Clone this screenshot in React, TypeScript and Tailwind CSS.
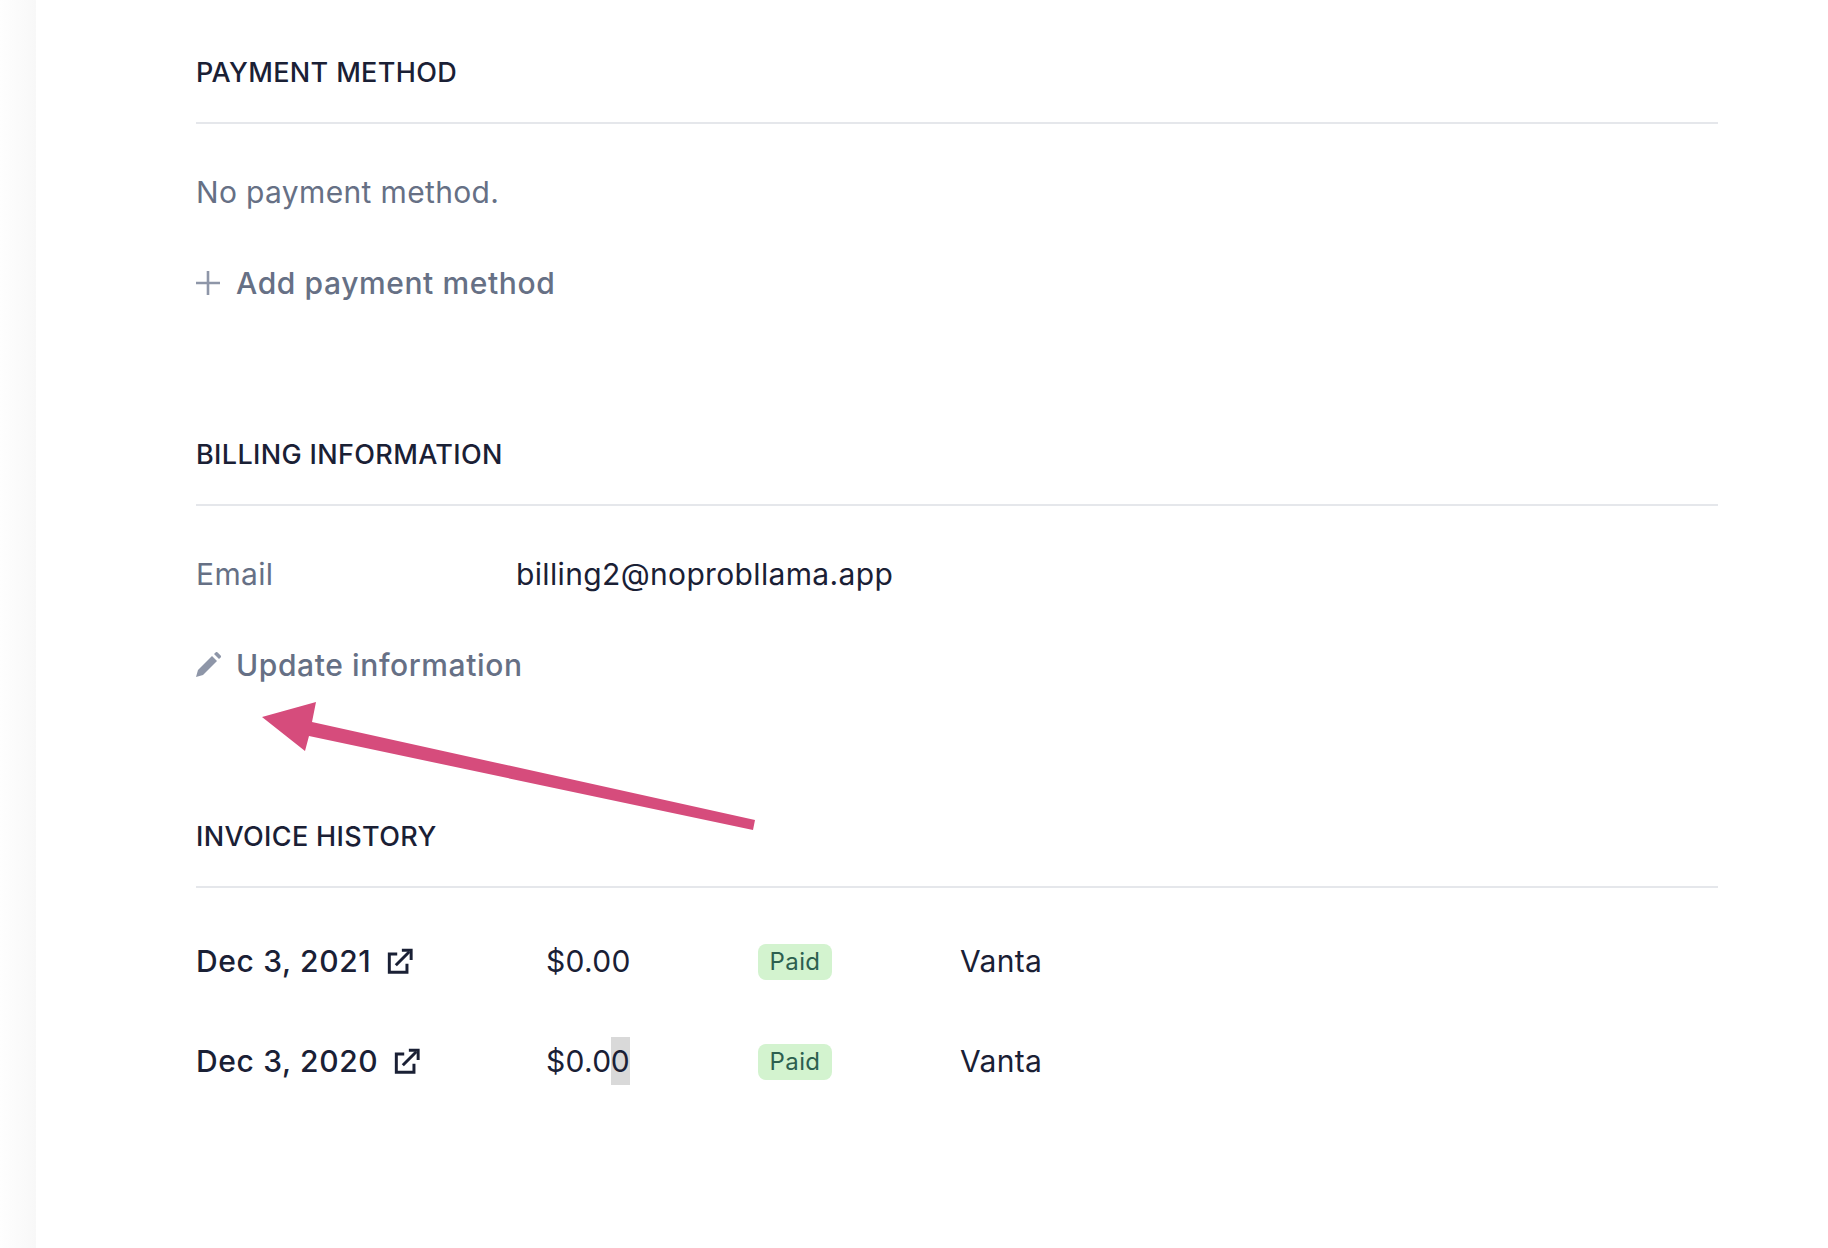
const PlusIcon = () => (
  <svg className="h-[24px] w-[24px]" viewBox="0 0 24 24" fill="none" stroke="#8e96a8" strokeWidth="2.6">
    <path d="M0 12h24M12 0v24" />
  </svg>
);

const PencilIcon = () => (
  <svg className="h-[26px] w-[26px]" viewBox="0 0 26 26" fill="#8e96a8">
    <path d="M0 25l2-7L16 4l5 5L7 23z" />
    <path d="M18 2l1.6-1.6a1.5 1.5 0 0 1 2 0l3 3a1.5 1.5 0 0 1 0 2L23 7z" />
  </svg>
);

const LinkIcon = () => (
  <svg className="ml-[16px] h-[26px] w-[26px]" viewBox="0 0 28 28" fill="none" stroke="#1a2035" strokeWidth="3.2">
    <path d="M11 6.5H2.5V26h19v-9" />
    <path d="M9.5 18.5L24 4" />
    <path d="M16 2.5h10V13" />
  </svg>
);

const SectionTitle = ({ children }: { children: string }) => (
  <div className="h-[67px] border-b-2 border-[#e5e7eb] text-[27px] leading-[32px] font-medium tracking-[0.35px] text-[#1a2035]">
    {children}
  </div>
);

const ActionRow = ({ icon, label }: { icon: React.ReactNode; label: string }) => (
  <div className="mt-[43px] flex h-[48px] items-center font-medium tracking-[0.6px] text-[#667085]">
    <span className="flex w-[40px] items-center">{icon}</span>
    <span>{label}</span>
  </div>
);

const InvoiceRow = ({ date, selected }: { date: string; selected?: boolean }) => (
  <div className="flex h-[48px] items-center">
    <div className="flex w-[350px] items-center font-medium tracking-[0.65px]">
      <span>{date}</span>
      <LinkIcon />
    </div>
    <div className="w-[212px]">
      {selected ? (
        <>
          $0.0<span className="-ml-[1px] inline-block bg-[#d9d9d9]">0</span>
        </>
      ) : (
        "$0.00"
      )}
    </div>
    <div className="w-[202px]">
      <span className="mt-[2px] flex h-[36px] w-[74px] items-center justify-center rounded-[8px] bg-[#d3f3cf] text-[24px] font-normal tracking-[0.4px] text-[#2d5f4f]">
        Paid
      </span>
    </div>
    <div>Vanta</div>
  </div>
);

export default function App() {
  return (
    <div className="relative flex h-[1248px] overflow-hidden bg-white font-['Inter',sans-serif] text-[30px] leading-[48px] tracking-[0.35px] text-[#1a2035]">
      {/* Left edge */}
      <div className="w-[36px] shrink-0 bg-gradient-to-r from-[#fefefe] to-[#f8f8f8]" />

      <main className="ml-[160px] w-[1522px] pt-[57px]">
        <section>
          <SectionTitle>PAYMENT METHOD</SectionTitle>
          <p className="mt-[44px] text-[#667085]">No payment method.</p>
          <ActionRow icon={<PlusIcon />} label="Add payment method" />
        </section>

        <section className="mt-[132px]">
          <SectionTitle>BILLING INFORMATION</SectionTitle>
          <div className="mt-[44px] flex">
            <span className="w-[320px] text-[#667085]">Email</span>
            <span>billing2@noprobllama.app</span>
          </div>
          <ActionRow icon={<PencilIcon />} label="Update information" />
        </section>

        <section className="mt-[132px]">
          <SectionTitle>INVOICE HISTORY</SectionTitle>
          <div className="mt-[49px] flex flex-col gap-[52px]">
            <InvoiceRow date="Dec 3, 2021" />
            <InvoiceRow date="Dec 3, 2020" selected />
          </div>
        </section>
      </main>

      {/* Annotation arrow */}
      <svg className="absolute top-0 left-0 h-[1248px] w-[1828px]" viewBox="0 0 1828 1248" fill="none">
        <polygon points="262,717 316,702 312,722 755,820 753,830 309,736 305,751" fill="#d64c7c" />
      </svg>
    </div>
  );
}
